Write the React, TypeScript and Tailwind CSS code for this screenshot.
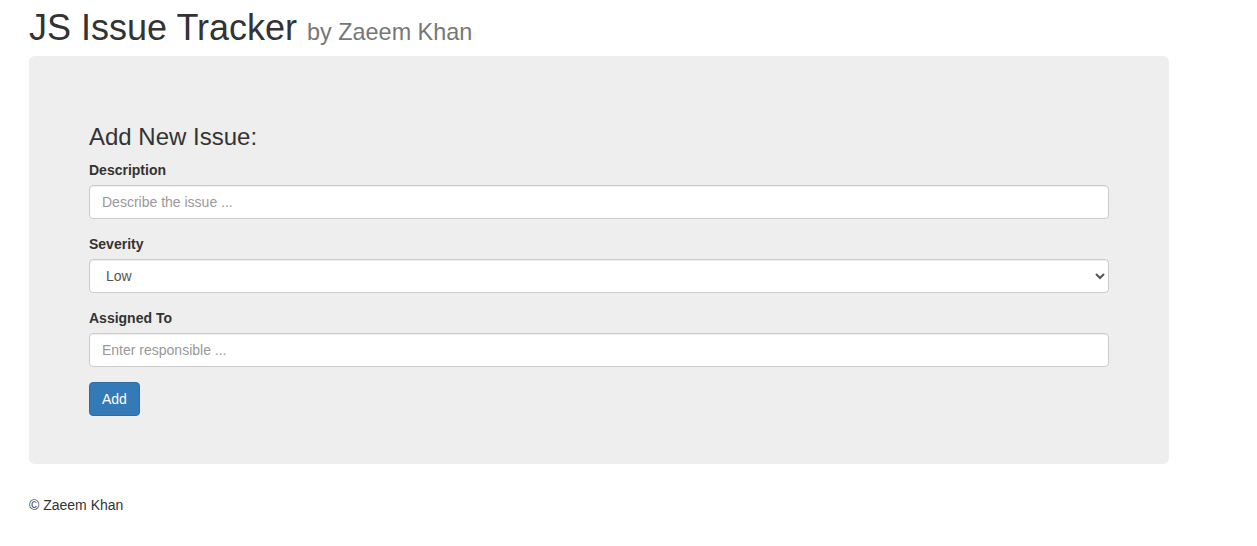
import React, { useState } from "react";

const inputCls =
  "block w-full h-[34px] px-[12px] py-[6px] text-[14px] leading-[1.42857] text-[#555] bg-white border border-[#ccc] rounded-[4px] shadow-[inset_0_1px_1px_rgba(0,0,0,0.075)] placeholder:text-[#999] outline-none focus:border-[#66afe9]";

const labelCls = "block pt-[1px] mb-[4px] font-bold";

export default function App() {
  const [severity, setSeverity] = useState("Low");

  return (
    <div className="min-h-[546px] bg-white text-[#333] text-[14px] leading-[1.42857] font-['Liberation_Sans',Arial,sans-serif]">
      <div className="ml-[29px] w-[1140px]">
        <h1 className="mt-[8px] mb-[8px] text-[36px] leading-[1.1] font-normal">
          JS Issue Tracker{" "}
          <small className="text-[65%] leading-none text-[#777]">by Zaeem Khan</small>
        </h1>

        {/* Form card */}
        <div className="bg-[#eee] rounded-[6px] px-[60px] py-[48px] mb-[30px]">
          <h3 className="mt-[20px] mb-[10px] text-[24px] leading-[1.1] font-normal">Add New Issue:</h3>
          <form onSubmit={(e) => e.preventDefault()}>
            <div className="mb-[15px]">
              <label className={labelCls}>Description</label>
              <input type="text" className={inputCls} placeholder="Describe the issue ..." />
            </div>
            <div className="mb-[15px]">
              <label className={labelCls}>Severity</label>
              <select
                className={inputCls}
                value={severity}
                onChange={(e) => setSeverity(e.target.value)}
              >
                <option>Low</option>
                <option>Medium</option>
                <option>High</option>
              </select>
            </div>
            <div className="mb-[15px]">
              <label className={labelCls}>Assigned To</label>
              <input type="text" className={inputCls} placeholder="Enter responsible ..." />
            </div>
            <button
              type="submit"
              className="h-[34px] px-[12px] pt-[7px] pb-[5px] text-[14px] leading-[1.42857] text-white bg-[#337ab7] border border-[#2e6da4] rounded-[4px] hover:bg-[#286090]"
            >
              Add
            </button>
          </form>
        </div>

        <footer className="pt-[2px]">
          <p>© Zaeem Khan</p>
        </footer>
      </div>
    </div>
  );
}
